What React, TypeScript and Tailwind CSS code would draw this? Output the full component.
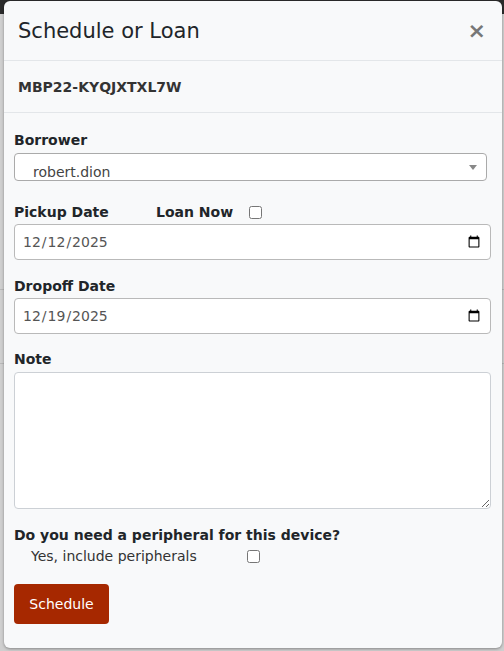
import React, { useState } from "react";

export default function App() {
  const [loanNow, setLoanNow] = useState(false);
  const [peripherals, setPeripherals] = useState(false);
  const [pickup, setPickup] = useState("2025-12-12");
  const [dropoff, setDropoff] = useState("2025-12-19");
  const [note, setNote] = useState("");

  return (
    <div className="relative w-[504px] h-[651px] overflow-hidden bg-[#cfcfcf] font-['DejaVu_Sans',sans-serif] text-[#212529]">
      {/* page behind the modal */}
      <div className="h-[14px] bg-[#2b2b2b]" />
      <div className="h-[276px] border-b border-[#b8b8b8]" />
      <div className="h-[74px] border-b border-[#b8b8b8]" />

      <div className="absolute left-[4px] top-[1px] w-[498px] h-[647px] rounded-[6px] bg-[#f8f9fa] shadow-[0_1px_3px_rgba(0,0,0,0.35)] flex flex-col">
        <div className="h-[60px] flex items-center justify-between px-[14px] pt-[3px] border-b border-[#e3e6e9]">
          <span className="text-[21px]">Schedule or Loan</span>
          <button className="text-[22px] leading-none font-bold text-[#777] mr-[2px] mb-[3px]">×</button>
        </div>
        <div className="h-[52px] flex items-center px-[14px] pt-[2px] border-b border-[#e3e6e9]">
          <span className="text-[14px] font-bold text-[#333]">MBP22-KYQJXTXL7W</span>
        </div>

        <div className="px-[10px] pt-[17px] flex flex-col text-[14px]">
          <label className="h-[20px] leading-[20px] font-bold">Borrower</label>
          <div className="mt-[3px] relative w-[473px] h-[28px] rounded-[4px] border border-[#aaa] bg-white">
            <span className="absolute left-[18px] top-[8px] text-[14px] text-[#444]">robert.dion</span>
            <span className="absolute right-[9px] top-[11px] w-0 h-0 border-l-[4px] border-r-[4px] border-t-[5px] border-l-transparent border-r-transparent border-t-[#888]" />
          </div>

          <div className="mt-[21px] h-[20px] flex items-center font-bold">
            <span className="w-[142px]">Pickup Date</span>
            <span>Loan Now</span>
            <input
              type="checkbox"
              checked={loanNow}
              onChange={(e) => setLoanNow(e.target.checked)}
              className="ml-[16px] w-[13px] h-[13px]"
            />
          </div>
          <input
            type="date"
            value={pickup}
            onChange={(e) => setPickup(e.target.value)}
            className="mt-[2px] w-[477px] h-[36px] rounded-[4px] border border-[#b9b9b9] bg-white px-[7px] text-[14px] text-[#555] font-['DejaVu_Sans',sans-serif]"
          />

          <label className="mt-[16px] h-[20px] leading-[20px] font-bold">Dropoff Date</label>
          <input
            type="date"
            value={dropoff}
            onChange={(e) => setDropoff(e.target.value)}
            className="mt-[2px] w-[477px] h-[36px] rounded-[4px] border border-[#b9b9b9] bg-white px-[7px] text-[14px] text-[#555] font-['DejaVu_Sans',sans-serif]"
          />

          <label className="mt-[15px] h-[20px] leading-[20px] font-bold">Note</label>
          <textarea
            value={note}
            onChange={(e) => setNote(e.target.value)}
            className="mt-[3px] w-[477px] h-[137px] rounded-[4px] border border-[#ccd0d5] bg-white"
          />

          <label className="mt-[16px] h-[20px] leading-[20px] font-bold">Do you need a peripheral for this device?</label>
          <div className="h-[22px] flex items-center pl-[17px] text-[#333]">
            <span className="w-[216px]">Yes, include peripherals</span>
            <input
              type="checkbox"
              checked={peripherals}
              onChange={(e) => setPeripherals(e.target.checked)}
              className="w-[13px] h-[13px]"
            />
          </div>

          <button className="mt-[17px] w-[95px] h-[40px] rounded-[4px] bg-[#a62800] text-white text-[14px]">
            Schedule
          </button>
        </div>
      </div>
    </div>
  );
}
